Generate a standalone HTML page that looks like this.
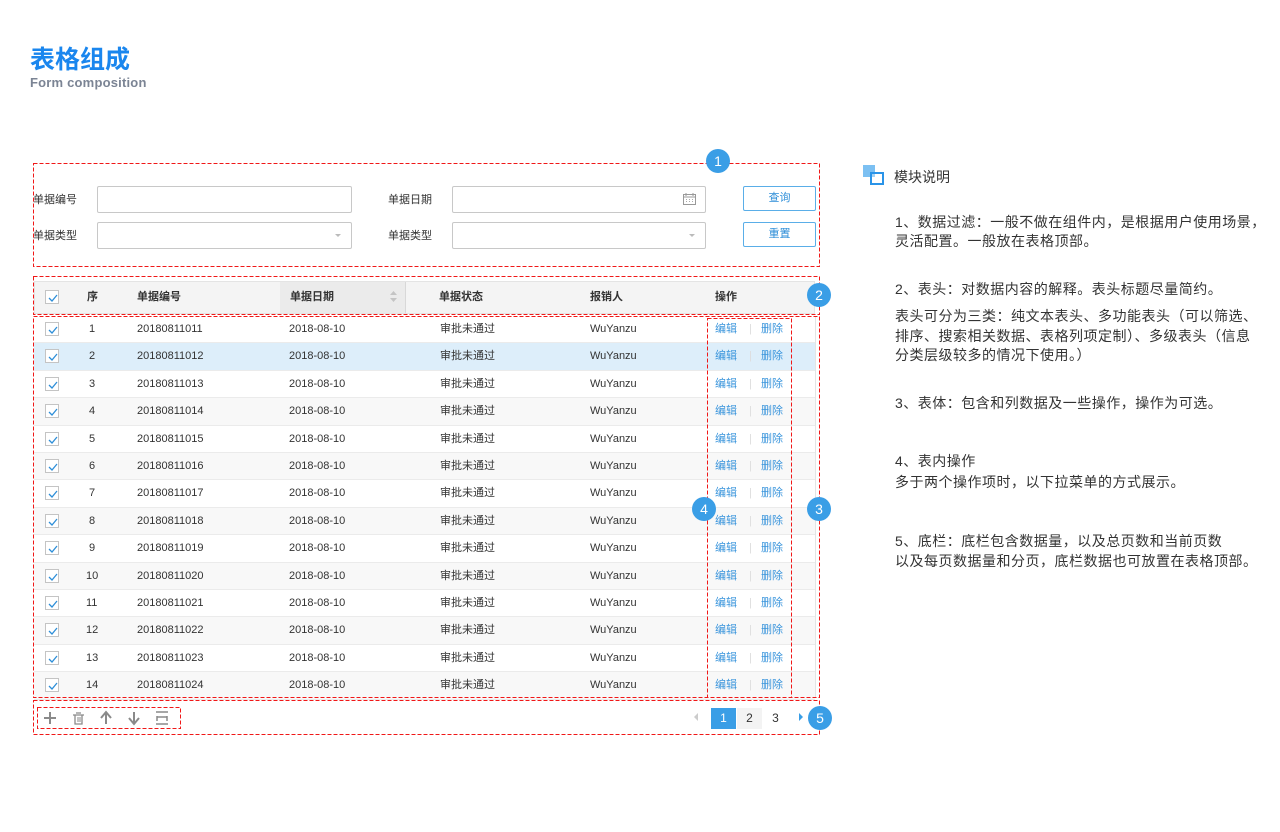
<!DOCTYPE html>
<html><head><meta charset="utf-8"><style>
*{margin:0;padding:0;box-sizing:border-box}
body{width:1280px;height:832px;background:#fff;position:relative;overflow:hidden;font-family:"Liberation Sans","Noto Sans CJK SC",sans-serif;color:#333}
.a{position:absolute}
.lbl{position:absolute;font-size:11px;color:#333;line-height:14px}
.inp{position:absolute;border:1px solid #c8c8c8;border-radius:2px;background:#fff}
.btn{position:absolute;border:1px solid #5aaee8;border-radius:2px;color:#2d8ed8;font-size:11px;text-align:center;line-height:23px}
.badge{position:absolute;width:24px;height:24px;border-radius:50%;background:#3a9ee6;color:#fff;font-size:14px;text-align:center;line-height:24px;z-index:3}
.cb{position:absolute;width:14px;height:14px;border:1px solid #c4c4c4;background:#fff}
.cb svg{position:absolute;left:1px;top:1px}
.row{position:absolute;left:34px;width:781px;height:27.4px;font-size:11px;border-bottom:1px solid #ebebeb}
.row span{position:absolute;top:0;line-height:26px}
.op{color:#3a95dc}
.rt{position:absolute;left:895px;font-size:14px;color:#333;white-space:nowrap;letter-spacing:0.5px;line-height:18px}
.hd{position:absolute;top:290px;font-size:11px;font-weight:bold;color:#333;line-height:14px}
svg.ov{position:absolute;left:0;top:0;z-index:2}
</style></head><body>
<div class="a" style="left:30px;top:40px;font-size:25px;font-weight:bold;color:#1a86ee">表格组成</div>
<div class="a" style="left:30px;top:75px;font-size:13px;color:#7b8494;font-weight:bold;letter-spacing:0.2px">Form composition</div>

<!-- box1 -->
<div class="lbl" style="left:33px;top:193px">单据编号</div>
<div class="inp" style="left:97px;top:186px;width:255px;height:27px"></div>
<div class="lbl" style="left:388px;top:193px">单据日期</div>
<div class="inp" style="left:452px;top:186px;width:254px;height:27px"></div>
<svg class="a" style="left:683px;top:193px" width="13" height="12"><rect x="0.5" y="1.5" width="12" height="10" fill="none" stroke="#999"/><line x1="0" y1="4" x2="13" y2="4" stroke="#999"/><line x1="3" y1="0" x2="3" y2="3" stroke="#999"/><line x1="10" y1="0" x2="10" y2="3" stroke="#999"/><g fill="#aaa"><rect x="3" y="6" width="1" height="1"/><rect x="6" y="6" width="1" height="1"/><rect x="9" y="6" width="1" height="1"/><rect x="3" y="8" width="1" height="1"/><rect x="6" y="8" width="1" height="1"/><rect x="9" y="8" width="1" height="1"/></g></svg>
<div class="btn" style="left:743px;top:186px;width:73px;height:25px">查询</div>
<div class="lbl" style="left:33px;top:229px">单据类型</div>
<div class="inp" style="left:97px;top:222px;width:255px;height:27px"></div>
<div class="a" style="left:335px;top:234px;border:3px solid transparent;border-top:3px solid #bbb"></div>
<div class="lbl" style="left:388px;top:229px">单据类型</div>
<div class="inp" style="left:452px;top:222px;width:254px;height:27px"></div>
<div class="a" style="left:689px;top:234px;border:3px solid transparent;border-top:3px solid #bbb"></div>
<div class="btn" style="left:743px;top:222px;width:73px;height:25px">重置</div>
<div class="badge" style="left:706px;top:149px">1</div>

<!-- header -->
<div class="a" style="left:34px;top:281px;width:781px;height:33px;background:#f4f4f4;border:1px solid #e4e4e4"></div>
<div class="a" style="left:280px;top:282px;width:126px;height:31px;background:#ebebeb;border-right:1px solid #d8d8d8"></div>
<div class="cb" style="left:45px;top:290px"><svg width="12" height="12"><path d="M2 6 L5 9 L10 3" fill="none" stroke="#2d8ed8" stroke-width="1.3"/></svg></div>
<div class="hd" style="left:87px">序</div>
<div class="hd" style="left:137px">单据编号</div>
<div class="hd" style="left:290px">单据日期</div>
<svg class="a" style="left:389px;top:290px" width="9" height="13"><path d="M1 5 L4.5 1 L8 5Z M1 8 L4.5 12 L8 8Z" fill="#c4c4c4"/></svg>
<div class="hd" style="left:439px">单据状态</div>
<div class="hd" style="left:590px">报销人</div>
<div class="hd" style="left:715px">操作</div>
<div class="badge" style="left:807px;top:283px">2</div>

<!-- rows -->
<div class="row" style="top:316px;"><div class="cb" style="left:11px;top:6px"><svg width="12" height="12"><path d="M2 6 L5 9 L10 3" fill="none" stroke="#2d8ed8" stroke-width="1.3"/></svg></div><span style="left:55px">1</span><span style="left:103px">20180811011</span><span style="left:255px">2018-08-10</span><span style="left:406px">审批未通过</span><span style="left:556px">WuYanzu</span><span class="op" style="left:681px">编辑</span><span style="left:715px;color:#ddd">|</span><span class="op" style="left:727px">删除</span></div>
<div class="row" style="top:343.4px;background:#ddeefa"><div class="cb" style="left:11px;top:6px"><svg width="12" height="12"><path d="M2 6 L5 9 L10 3" fill="none" stroke="#2d8ed8" stroke-width="1.3"/></svg></div><span style="left:55px">2</span><span style="left:103px">20180811012</span><span style="left:255px">2018-08-10</span><span style="left:406px">审批未通过</span><span style="left:556px">WuYanzu</span><span class="op" style="left:681px">编辑</span><span style="left:715px;color:#ddd">|</span><span class="op" style="left:727px">删除</span></div>
<div class="row" style="top:370.8px;"><div class="cb" style="left:11px;top:6px"><svg width="12" height="12"><path d="M2 6 L5 9 L10 3" fill="none" stroke="#2d8ed8" stroke-width="1.3"/></svg></div><span style="left:55px">3</span><span style="left:103px">20180811013</span><span style="left:255px">2018-08-10</span><span style="left:406px">审批未通过</span><span style="left:556px">WuYanzu</span><span class="op" style="left:681px">编辑</span><span style="left:715px;color:#ddd">|</span><span class="op" style="left:727px">删除</span></div>
<div class="row" style="top:398.2px;background:#f8f8f8"><div class="cb" style="left:11px;top:6px"><svg width="12" height="12"><path d="M2 6 L5 9 L10 3" fill="none" stroke="#2d8ed8" stroke-width="1.3"/></svg></div><span style="left:55px">4</span><span style="left:103px">20180811014</span><span style="left:255px">2018-08-10</span><span style="left:406px">审批未通过</span><span style="left:556px">WuYanzu</span><span class="op" style="left:681px">编辑</span><span style="left:715px;color:#ddd">|</span><span class="op" style="left:727px">删除</span></div>
<div class="row" style="top:425.6px;"><div class="cb" style="left:11px;top:6px"><svg width="12" height="12"><path d="M2 6 L5 9 L10 3" fill="none" stroke="#2d8ed8" stroke-width="1.3"/></svg></div><span style="left:55px">5</span><span style="left:103px">20180811015</span><span style="left:255px">2018-08-10</span><span style="left:406px">审批未通过</span><span style="left:556px">WuYanzu</span><span class="op" style="left:681px">编辑</span><span style="left:715px;color:#ddd">|</span><span class="op" style="left:727px">删除</span></div>
<div class="row" style="top:453px;background:#f8f8f8"><div class="cb" style="left:11px;top:6px"><svg width="12" height="12"><path d="M2 6 L5 9 L10 3" fill="none" stroke="#2d8ed8" stroke-width="1.3"/></svg></div><span style="left:55px">6</span><span style="left:103px">20180811016</span><span style="left:255px">2018-08-10</span><span style="left:406px">审批未通过</span><span style="left:556px">WuYanzu</span><span class="op" style="left:681px">编辑</span><span style="left:715px;color:#ddd">|</span><span class="op" style="left:727px">删除</span></div>
<div class="row" style="top:480.4px;"><div class="cb" style="left:11px;top:6px"><svg width="12" height="12"><path d="M2 6 L5 9 L10 3" fill="none" stroke="#2d8ed8" stroke-width="1.3"/></svg></div><span style="left:55px">7</span><span style="left:103px">20180811017</span><span style="left:255px">2018-08-10</span><span style="left:406px">审批未通过</span><span style="left:556px">WuYanzu</span><span class="op" style="left:681px">编辑</span><span style="left:715px;color:#ddd">|</span><span class="op" style="left:727px">删除</span></div>
<div class="row" style="top:507.8px;background:#f8f8f8"><div class="cb" style="left:11px;top:6px"><svg width="12" height="12"><path d="M2 6 L5 9 L10 3" fill="none" stroke="#2d8ed8" stroke-width="1.3"/></svg></div><span style="left:55px">8</span><span style="left:103px">20180811018</span><span style="left:255px">2018-08-10</span><span style="left:406px">审批未通过</span><span style="left:556px">WuYanzu</span><span class="op" style="left:681px">编辑</span><span style="left:715px;color:#ddd">|</span><span class="op" style="left:727px">删除</span></div>
<div class="row" style="top:535.2px;"><div class="cb" style="left:11px;top:6px"><svg width="12" height="12"><path d="M2 6 L5 9 L10 3" fill="none" stroke="#2d8ed8" stroke-width="1.3"/></svg></div><span style="left:55px">9</span><span style="left:103px">20180811019</span><span style="left:255px">2018-08-10</span><span style="left:406px">审批未通过</span><span style="left:556px">WuYanzu</span><span class="op" style="left:681px">编辑</span><span style="left:715px;color:#ddd">|</span><span class="op" style="left:727px">删除</span></div>
<div class="row" style="top:562.6px;background:#f8f8f8"><div class="cb" style="left:11px;top:6px"><svg width="12" height="12"><path d="M2 6 L5 9 L10 3" fill="none" stroke="#2d8ed8" stroke-width="1.3"/></svg></div><span style="left:52px">10</span><span style="left:103px">20180811020</span><span style="left:255px">2018-08-10</span><span style="left:406px">审批未通过</span><span style="left:556px">WuYanzu</span><span class="op" style="left:681px">编辑</span><span style="left:715px;color:#ddd">|</span><span class="op" style="left:727px">删除</span></div>
<div class="row" style="top:590px;"><div class="cb" style="left:11px;top:6px"><svg width="12" height="12"><path d="M2 6 L5 9 L10 3" fill="none" stroke="#2d8ed8" stroke-width="1.3"/></svg></div><span style="left:52px">11</span><span style="left:103px">20180811021</span><span style="left:255px">2018-08-10</span><span style="left:406px">审批未通过</span><span style="left:556px">WuYanzu</span><span class="op" style="left:681px">编辑</span><span style="left:715px;color:#ddd">|</span><span class="op" style="left:727px">删除</span></div>
<div class="row" style="top:617.4px;background:#f8f8f8"><div class="cb" style="left:11px;top:6px"><svg width="12" height="12"><path d="M2 6 L5 9 L10 3" fill="none" stroke="#2d8ed8" stroke-width="1.3"/></svg></div><span style="left:52px">12</span><span style="left:103px">20180811022</span><span style="left:255px">2018-08-10</span><span style="left:406px">审批未通过</span><span style="left:556px">WuYanzu</span><span class="op" style="left:681px">编辑</span><span style="left:715px;color:#ddd">|</span><span class="op" style="left:727px">删除</span></div>
<div class="row" style="top:644.8px;"><div class="cb" style="left:11px;top:6px"><svg width="12" height="12"><path d="M2 6 L5 9 L10 3" fill="none" stroke="#2d8ed8" stroke-width="1.3"/></svg></div><span style="left:52px">13</span><span style="left:103px">20180811023</span><span style="left:255px">2018-08-10</span><span style="left:406px">审批未通过</span><span style="left:556px">WuYanzu</span><span class="op" style="left:681px">编辑</span><span style="left:715px;color:#ddd">|</span><span class="op" style="left:727px">删除</span></div>
<div class="row" style="top:672.2px;background:#f8f8f8"><div class="cb" style="left:11px;top:6px"><svg width="12" height="12"><path d="M2 6 L5 9 L10 3" fill="none" stroke="#2d8ed8" stroke-width="1.3"/></svg></div><span style="left:52px">14</span><span style="left:103px">20180811024</span><span style="left:255px">2018-08-10</span><span style="left:406px">审批未通过</span><span style="left:556px">WuYanzu</span><span class="op" style="left:681px">编辑</span><span style="left:715px;color:#ddd">|</span><span class="op" style="left:727px">删除</span></div>
<div class="a" style="left:815px;top:316px;width:1px;height:381px;background:#e4e4e4"></div>

<div class="badge" style="left:692px;top:497px">4</div>
<div class="badge" style="left:807px;top:497px">3</div>

<!-- footer -->
<svg class="a" style="left:43px;top:710px" width="130" height="16">
<g stroke="#8a8a8a" stroke-width="2" fill="none">
<path d="M7 2 V14 M1 8 H13"/>
<path d="M30 5 H41 M32 5 V14 H39 V5 M33 3 H38" stroke-width="1.3"/>
<path d="M35 7 V12 M37 7 V12" stroke-width="1"/>
<path d="M63 14 V3 M58 8 L63 2 L68 8"/>
<path d="M91 2 V13 M86 8 L91 14 L96 8"/>
<path d="M113 2 H125 M113 14 H125 M114 6 V11 M124 6 V11 M114 7 H124" stroke-width="1.5"/>
</g></svg>
<div class="a" style="left:694px;top:713px;border:4px solid transparent;border-right:4px solid #ccc;border-left:0"></div>
<div class="a" style="left:711px;top:708px;width:25px;height:21px;background:#3a9ee6;color:#fff;font-size:12px;text-align:center;line-height:21px">1</div>
<div class="a" style="left:737px;top:708px;width:25px;height:21px;background:#f3f3f3;font-size:12px;text-align:center;line-height:21px">2</div>
<div class="a" style="left:763px;top:708px;width:25px;height:21px;font-size:12px;text-align:center;line-height:21px">3</div>
<div class="a" style="left:799px;top:713px;border:4px solid transparent;border-left:4px solid #3a9ee6;border-right:0"></div>
<div class="badge" style="left:808px;top:706px">5</div>

<!-- dashed overlays -->
<svg class="ov" width="1280" height="832"><g fill="none" stroke="#f01818" stroke-width="1" stroke-dasharray="4 2">
<rect x="33.5" y="163.5" width="786" height="103"/>
<rect x="33.5" y="276.5" width="786" height="38"/>
<rect x="33.5" y="316.5" width="786" height="381"/>
<rect x="707.5" y="318.5" width="84" height="379"/>
<rect x="33.5" y="700.5" width="786" height="34"/>
<rect x="37.5" y="707.5" width="143" height="21"/>
</g></svg>

<!-- right side -->
<div class="a" style="left:863px;top:165px;width:12px;height:12px;background:#7cc0f2"></div>
<div class="a" style="left:870px;top:172px;width:14px;height:13px;border:2px solid #2a94e8;background:rgba(255,255,255,0.3)"></div>
<div class="a" style="left:894px;top:167px;font-size:14px;color:#333">模块说明</div>
<div class="rt" style="top:213px">1、数据过滤：一般不做在组件内，是根据用户使用场景，</div>
<div class="rt" style="top:232px">灵活配置。一般放在表格顶部。</div>
<div class="rt" style="top:280px">2、表头：对数据内容的解释。表头标题尽量简约。</div>
<div class="rt" style="top:307px">表头可分为三类：纯文本表头、多功能表头（可以筛选、</div>
<div class="rt" style="top:327px">排序、搜索相关数据、表格列项定制）、多级表头（信息</div>
<div class="rt" style="top:346px">分类层级较多的情况下使用。）</div>
<div class="rt" style="top:394px">3、表体：包含和列数据及一些操作，操作为可选。</div>
<div class="rt" style="top:452px">4、表内操作</div>
<div class="rt" style="top:473px">多于两个操作项时，以下拉菜单的方式展示。</div>
<div class="rt" style="top:532px">5、底栏：底栏包含数据量，以及总页数和当前页数</div>
<div class="rt" style="top:552px">以及每页数据量和分页，底栏数据也可放置在表格顶部。</div>
</body></html>
